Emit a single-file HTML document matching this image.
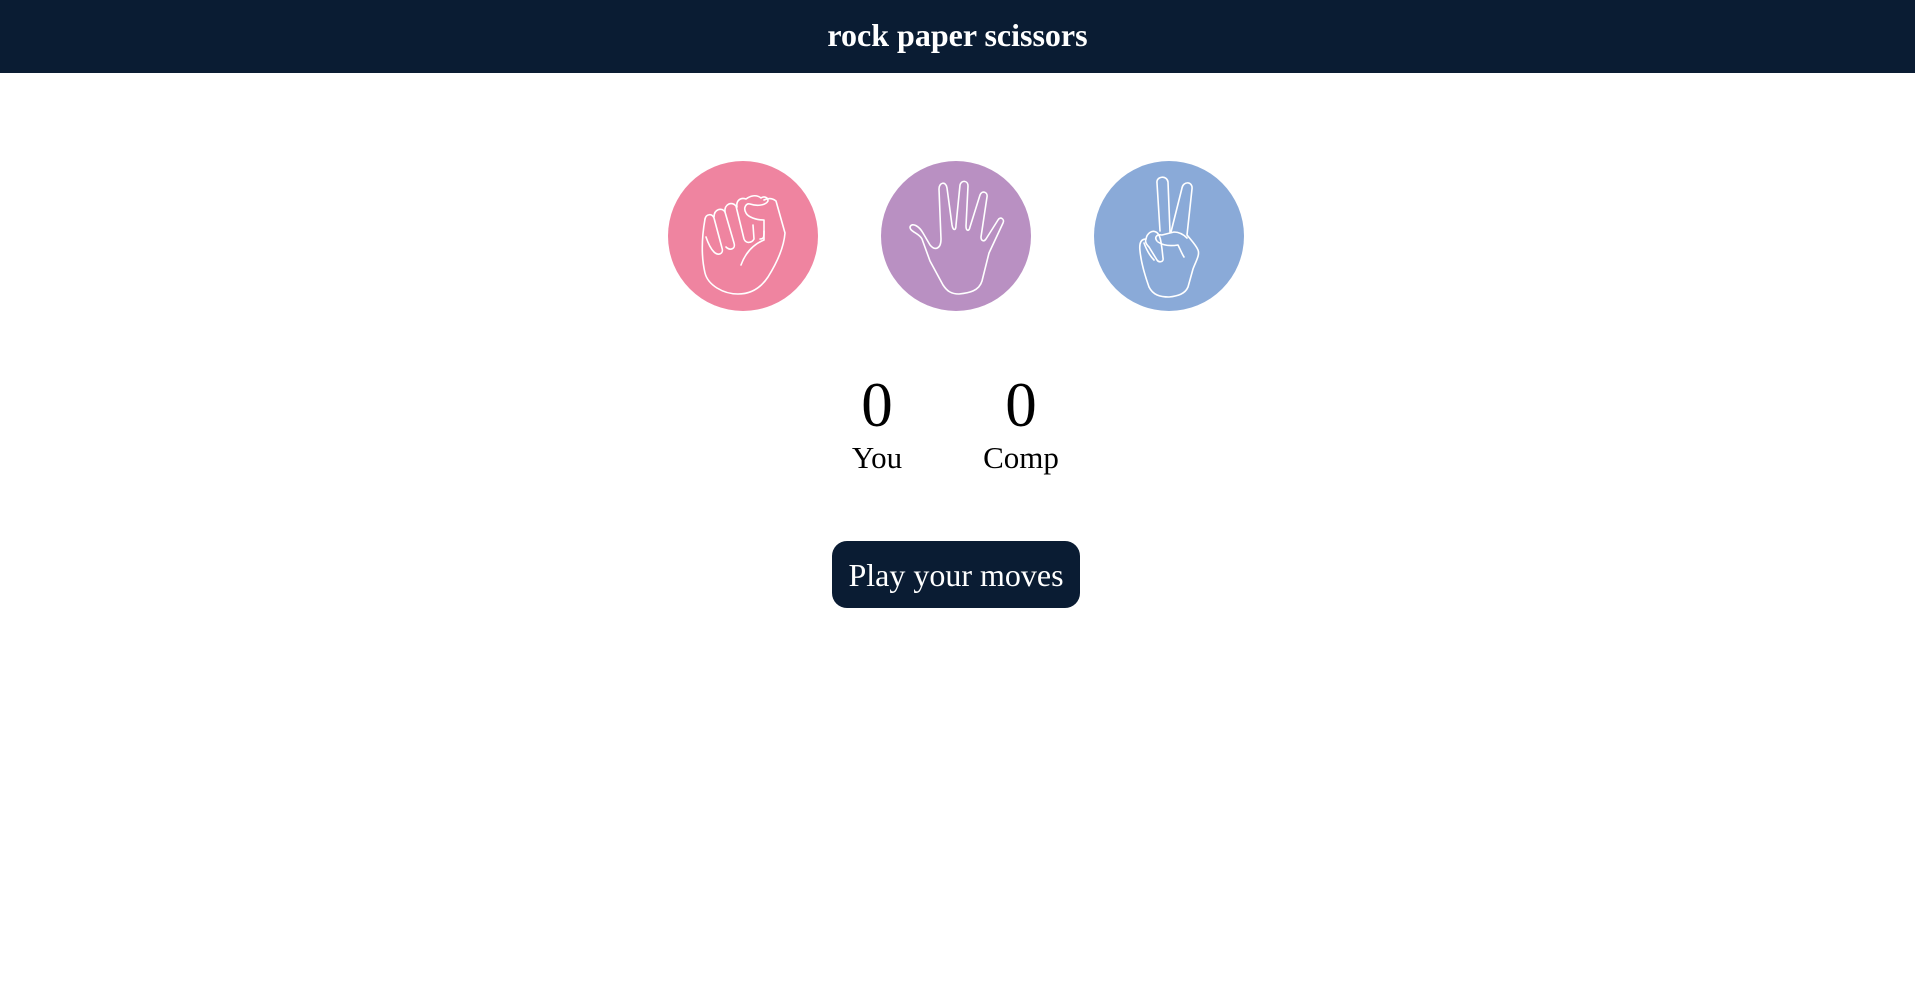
<!DOCTYPE html>
<html><head><meta charset="utf-8"><style>
html,body{margin:0;padding:0;width:1915px;height:990px;background:#fff;overflow:hidden;font-family:"Liberation Serif",serif;}
.hdr{position:absolute;left:0;top:0;width:1915px;height:73px;background:#0a1c33;color:#fff;text-align:center;font-weight:bold;font-size:32px;line-height:70px;}
.c{position:absolute;top:161px;width:150px;height:150px;border-radius:50%;}
.c svg{position:absolute;left:0;top:0}
.t{position:absolute;text-align:center;width:200px;color:#000;}
.btn{position:absolute;left:832px;top:541px;width:248px;height:67px;background:#0a1c33;border-radius:15px;color:#fff;font-size:32px;text-align:center;line-height:68px;}
</style></head><body>
<div class="hdr">rock paper scissors</div>

<div class="c" style="left:668px;background:#ef84a0">
<svg width="150" height="150" viewBox="0 0 150 150" fill="none" stroke="#fff" stroke-width="1.6" stroke-linejoin="round" stroke-linecap="round">
<path d="M37,58 C34,75 33,95 37,112 C40,124 55,133 70,133 C82,133 92,128 100,116 C110,100 116,85 117,72 L108,40 C104,37 100,37 96,39"/>
<path d="M37,58 C38,53 44,52 46,57 L54,87 C56,93 50,95 46,91 C42,87 40,82 38,76"/>
<path d="M46,56 C46,48 54,46 57,51 L66,82 C68,88 62,90 58,86"/>
<path d="M57,51 C56,43 64,40 68,45 L76,78 C78,83 84,82 86,78 L85,64"/>
<path d="M69,46 C68,40 72,36 78,38 C82,35 88,33 93,37 C96,35 100,36 100,40 C97,45 88,45 82,43 C78,42 75,47 78,52 C80,56 88,59 96,59 L96,70 C96,76 96,78 92,78"/>
<path d="M96,70 L96,79 C84,84 77,93 73,104"/>
</svg></div>

<div class="c" style="left:881px;background:#b990c2">
<svg width="150" height="150" viewBox="0 0 150 150" fill="none" stroke="#fff" stroke-width="1.6" stroke-linejoin="round" stroke-linecap="round">
<path d="M29,66 C31,61 38,65 42,72 L49,84 C54,90 60,88 60,78 L58,28 C58,21 65,20 66,27 L71,64 C72,70 75,70 75,64 L79,24 C80,19 87,19 87,25 L85,65 C85,70 88,71 89,66 L99,34 C101,29 107,31 106,36 L100,76 C100,80 103,81 105,78 L117,59 C119,55 124,58 122,62 L108,92 L101,120 C98,130 88,132 78,133 C70,133 66,130 62,124 L49,100 L41,78 C38,72 29,71 29,66 Z"/>
</svg></div>

<div class="c" style="left:1094px;background:#8aaad8">
<svg width="150" height="150" viewBox="0 0 150 150" fill="none" stroke="#fff" stroke-width="1.6" stroke-linejoin="round" stroke-linecap="round">
<path d="M66,70 L63,22 C62,15 73,14 74,21 L76,71"/>
<path d="M77,71 L88,27 C89,20 99,20 98,28 L93,74 C97,79 102,84 104,89 C106,94 102,100 99,108 L94,126 C91,133 84,135 75,136 C66,136 59,134 55,126 C50,112 47,100 46,90 C45,82 47,78 52,78"/>
<path d="M52,78 C53,72 58,69 62,71 C66,73 67,80 68,88 L69,97 C70,101 65,102 63,99 L55,86 C52,83 51,80 52,78"/>
<path d="M50,82 C53,90 57,96 60,99"/>
<path d="M63,80 C60,76 63,73 68,74 L80,71 C86,71 90,74 93,77"/>
<path d="M64,81 C70,85 78,85 84,84 C86,88 88,93 90,96"/>
</svg></div>

<div class="t" style="left:777px;top:367px;font-size:63px;line-height:76px;">0</div>
<div class="t" style="left:921px;top:367px;font-size:63px;line-height:76px;">0</div>
<div class="t" style="left:777px;top:438px;font-size:31px;line-height:40px;">You</div>
<div class="t" style="left:921px;top:438px;font-size:31px;line-height:40px;">Comp</div>

<div class="btn">Play your moves</div>
</body></html>
